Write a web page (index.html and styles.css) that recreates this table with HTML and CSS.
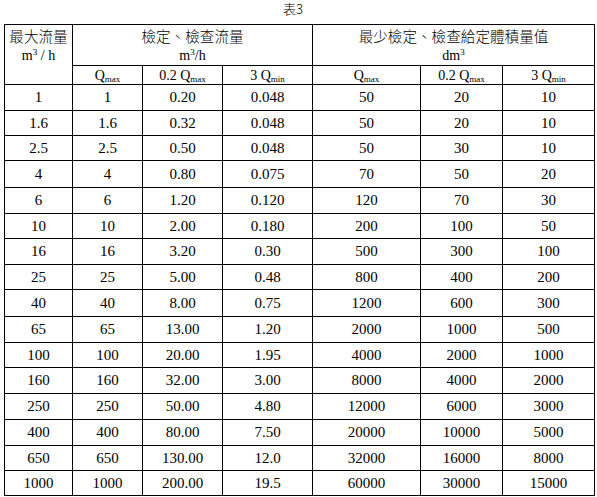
FILE: index.html
```html
<!DOCTYPE html>
<html lang="zh-Hant">
<head>
<meta charset="utf-8">
<title>表3</title>
<link rel="stylesheet" href="styles.css">
</head>
<body>
<div class="title">表3</div>
<table class="grid">
  <colgroup>
    <col class="c1"><col class="c2"><col class="c3"><col class="c4"><col class="c5"><col class="c6"><col class="c7">
  </colgroup>
  <thead>
    <tr class="h1">
      <th rowspan="2" class="top">最大流量<br><span class="unit">m<sup>3</sup> / h</span></th>
      <th colspan="3" class="top grp">檢定、檢查流量<br><span class="unit">m<sup>3</sup>/h</span></th>
      <th colspan="3" class="top grp">最少檢定、檢查給定體積量值<br><span class="unit">dm<sup>3</sup></span></th>
    </tr>
    <tr class="h2">
      <th>Q<sub>max</sub></th>
      <th>0.2 Q<sub>max</sub></th>
      <th>3 Q<sub>min</sub></th>
      <th>Q<sub>max</sub></th>
      <th>0.2 Q<sub>max</sub></th>
      <th>3 Q<sub>min</sub></th>
    </tr>
  </thead>
  <tbody>
    <tr class="r26"><td>1</td><td>1</td><td>0.20</td><td>0.048</td><td>50</td><td>20</td><td>10</td></tr>
    <tr class="r25"><td>1.6</td><td>1.6</td><td>0.32</td><td>0.048</td><td>50</td><td>20</td><td>10</td></tr>
    <tr class="r25"><td>2.5</td><td>2.5</td><td>0.50</td><td>0.048</td><td>50</td><td>30</td><td>10</td></tr>
    <tr class="r27"><td>4</td><td>4</td><td>0.80</td><td>0.075</td><td>70</td><td>50</td><td>20</td></tr>
    <tr class="r26"><td>6</td><td>6</td><td>1.20</td><td>0.120</td><td>120</td><td>70</td><td>30</td></tr>
    <tr class="r25"><td>10</td><td>10</td><td>2.00</td><td>0.180</td><td>200</td><td>100</td><td>50</td></tr>
    <tr class="r26"><td>16</td><td>16</td><td>3.20</td><td>0.30</td><td>500</td><td>300</td><td>100</td></tr>
    <tr class="r25"><td>25</td><td>25</td><td>5.00</td><td>0.48</td><td>800</td><td>400</td><td>200</td></tr>
    <tr class="r27"><td>40</td><td>40</td><td>8.00</td><td>0.75</td><td>1200</td><td>600</td><td>300</td></tr>
    <tr class="r26"><td>65</td><td>65</td><td>13.00</td><td>1.20</td><td>2000</td><td>1000</td><td>500</td></tr>
    <tr class="r25"><td>100</td><td>100</td><td>20.00</td><td>1.95</td><td>4000</td><td>2000</td><td>1000</td></tr>
    <tr class="r26"><td>160</td><td>160</td><td>32.00</td><td>3.00</td><td>8000</td><td>4000</td><td>2000</td></tr>
    <tr class="r26"><td>250</td><td>250</td><td>50.00</td><td>4.80</td><td>12000</td><td>6000</td><td>3000</td></tr>
    <tr class="r26"><td>400</td><td>400</td><td>80.00</td><td>7.50</td><td>20000</td><td>10000</td><td>5000</td></tr>
    <tr class="r25"><td>650</td><td>650</td><td>130.00</td><td>12.0</td><td>32000</td><td>16000</td><td>8000</td></tr>
    <tr class="r25"><td>1000</td><td>1000</td><td>200.00</td><td>19.5</td><td>60000</td><td>30000</td><td>15000</td></tr>
  </tbody>
</table>
</body>
</html>
```

FILE: styles.css
```css
html, body {
  margin: 0;
  padding: 0;
  background: #ffffff;
  color: #000000;
  font-family: "Liberation Serif", "Noto Sans CJK TC", serif;
}

.title {
  height: 24px;
  box-sizing: border-box;
  padding-top: 1px;
  padding-left: 283px;
  font-size: 13px;
  line-height: 15px;
  font-family: "Noto Sans CJK TC", sans-serif;
  font-weight: 300;
}

.grid {
  margin-left: 4px;
  border-collapse: collapse;
  table-layout: fixed;
  width: 591px;
  font-size: 15px;
}

.c1 { width: 68px; }
.c2 { width: 70px; }
.c3 { width: 80px; }
.c4 { width: 90px; }
.c5 { width: 108px; }
.c6 { width: 82px; }
.c7 { width: 92px; }

.grid th,
.grid td {
  border: 1px solid #000000;
  padding: 0;
  text-align: center;
  vertical-align: middle;
  font-weight: normal;
  white-space: nowrap;
}

.grid th.top {
  vertical-align: top;
  font-family: "Noto Sans CJK TC", sans-serif;
  font-weight: 300;
  font-size: 14.6px;
  line-height: 18px;
  padding-top: 2px;
}

.unit {
  font-family: "Liberation Serif", serif;
  font-size: 14px;
  font-weight: normal;
}

.unit sup {
  font-size: 9px;
  vertical-align: 5px;
  line-height: 0;
}

.h1 { height: 39px; }
.h2 { height: 19px; }
.h2 th { font-size: 14px; line-height: 15px; }

sub {
  font-size: 9px;
  vertical-align: -2px;
  line-height: 0;
}

.r25 { height: 25px; }
.r26 { height: 26px; }
.r27 { height: 27px; }
```
